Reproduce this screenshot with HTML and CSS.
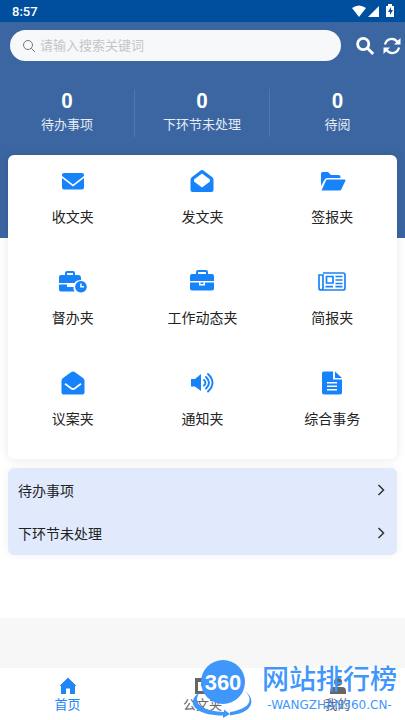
FILE: index.html
```html
<!DOCTYPE html>
<html lang="zh-CN">
<head>
<meta charset="utf-8">
<meta name="viewport" content="width=device-width, initial-scale=1">
<title>首页</title>
<link rel="stylesheet" href="styles.css">
</head>
<body>
<header class="header">
  <div class="status">
    <span>8:57</span>
    <svg width="44" height="14" viewBox="0 0 44 14" fill="currentColor" aria-hidden="true">
      <path d="M0 4Q7-1 14 4L7 13Z"/><path d="M27 2V13H16Z"/>
      <path fill-rule="evenodd" d="M34 2h2V0h4v2h2v11h-8ZM39 3l-3 5h2v3l3-5h-2Z"/>
    </svg>
  </div>
  <form class="search">
    <label class="search-box">
      <svg width="14" height="14" viewBox="0 0 14 14" fill="none" stroke="#777" aria-hidden="true"><circle cx="6" cy="6" r="4.5"/><path d="M9.3 9.3L13 13"/></svg>
      <input type="search" placeholder="请输入搜索关键词" aria-label="搜索">
    </label>
    <button class="tool" type="submit" aria-label="搜索">
      <svg width="18" height="18" viewBox="0 0 18 18" fill="none" stroke="currentColor" stroke-width="2.8" aria-hidden="true"><circle cx="7.200" cy="7" r="5.600"/><path d="M11.200 11l6 6"/></svg>
    </button>
    <button class="tool" type="button" aria-label="刷新">
      <svg width="18" height="18" viewBox="0 0 18 18" fill="none" stroke="currentColor" stroke-width="2.3" aria-hidden="true"><path d="M2 7.5C3.5 1.5 10.500 0 14.500 5M16 10.500C14.500 16.500 7.500 18 3.500 13"/><path d="M17.500 1v6.500h-6.500ZM.5 17v-6.500h6.500Z" fill="currentColor" stroke="none"/></svg>
    </button>
  </form>
  <div class="stats">
    <a href="#todo"><strong>0</strong><span>待办事项</span></a>
    <a href="#next"><strong>0</strong><span>下环节未处理</span></a>
    <a href="#read"><strong>0</strong><span>待阅</span></a>
  </div>
</header>
<main class="main">
  <nav class="card" aria-label="文件夹">
    <a href="#receive"><svg viewBox="0 0 28 24"><path d="M5 4H23Q25 4 25 6V7L14 15.500L3 7V6Q3 4 5 4Z"/><path d="M3 9L14 17.500L25 9V18.500Q25 20.500 23 20.500H5Q3 20.500 3 18.500Z"/></svg>收文夹</a>
    <a href="#send"><svg viewBox="0 0 28 24"><path fill-rule="evenodd" d="M14 1Q15 1 16 2L24 8Q25.500 9 25.500 11V21Q25.500 23 23.500 23H4.500Q2.500 23 2.500 21V11Q2.500 9 4 8L12 2Q13 1 14 1ZM14 4.500L6 10.500V12.500L14 18.500L22 12.500V10.500Z"/></svg>发文夹</a>
    <a href="#sign"><svg viewBox="0 0 28 24"><path d="M3 17V4.500Q3 3 4.500 3H10L13 6H20.500Q22.500 6 22.500 8V9H9.500Q7.500 9 6.700 10.500Z"/><path d="M9.500 10.500H26.500Q28 10.500 27.300 12L23.500 20Q23 21.500 21.500 21.500H3.500L8 11.500Q8.500 10.500 9.500 10.500Z"/></svg>签报夹</a>
    <a href="#supervise"><svg viewBox="0 0 28 24"><path fill-rule="evenodd" d="M6 5V3Q6 1 8 1H14Q16 1 16 3V5H19Q22 5 22 8V10Q17 10 15.500 13H0V7Q0 5 2 5ZM8 3V5H14V3ZM0 14.500H8V17H14.500Q14 19.500 15.500 21.500H2Q0 21.500 0 19.500Z"/><path fill-rule="evenodd" d="M22 11A5.800 5.800 0 1 1 21.900 11ZM21.200 13.500V17.500H25V16H22.700V13.500Z"/></svg>督办夹</a>
    <a href="#work"><svg viewBox="0 0 28 24"><path fill-rule="evenodd" d="M8 4V2Q8 0 10 0H18Q20 0 20 2V4H24Q26 4 26 6V11H2V6Q2 4 4 4ZM10 2V4H18V2ZM2 12.500H11V15.500H17V12.500H26V18.500Q26 20.500 24 20.500H4Q2 20.500 2 18.500ZM12.500 12.500H15.500V14H12.500Z"/></svg>工作动态夹</a>
    <a href="#brief"><svg viewBox="0 0 28 24"><path fill="none" stroke="currentColor" stroke-width="1.700" d="M5 3H25Q27 3 27 5V18Q27 20 25 20H3Q1 20 1 18V5H5V18Q5 20 3 20M8.500 6.500H15V13H8.500ZM17.500 6.500H24.500M17.500 10H24.500M17.500 13.500H24.500M7.500 16.700H15M17.500 16.700H24.500"/></svg>简报夹</a>
    <a href="#proposal"><svg viewBox="0 0 28 24"><path fill-rule="evenodd" d="M14 .5Q15 .5 16 1.200L24 7Q25.500 8 25.500 10V21.500Q25.500 23.500 23.500 23.500H4.500Q2.500 23.500 2.500 21.500V10Q2.500 8 4 7L12 1.200Q13 .5 14 .5ZM6.500 12L5.500 13.500L11.500 18Q14 20 16.500 18L22.500 13.500L21.500 12L15.500 16.500Q14 17.700 12.500 16.500Z"/></svg>议案夹</a>
    <a href="#notice"><svg viewBox="0 0 28 24"><path d="M3 8H7L13 3V20L7 15.500H3Z"/><path fill="none" stroke="currentColor" stroke-width="1.900" stroke-linecap="round" d="M16 9Q19 11.700 16 14.500M18 6Q24 11.700 18 17.500M20 3Q29 11.700 20 20.500"/></svg>通知夹</a>
    <a href="#general"><svg viewBox="0 0 28 24"><path fill-rule="evenodd" d="M6 .5H15V8.500H24V21.500Q24 23.500 22 23.500H6Q4 23.500 4 21.500V2.500Q4 .5 6 .5ZM9 11V12.500H19V11ZM9 14.500V16H19V14.500ZM9 18V19.500H19V18Z"/><path d="M17 .5L24 7H17Z"/></svg>综合事务</a>
  </nav>
  <nav class="list" aria-label="待处理">
    <a href="#todo">待办事项<svg width="8" height="12" viewBox="0 0 8 12" stroke-width="1.5"><path d="M1.500 1L6.500 6L1.500 11"/></svg></a>
    <a href="#next">下环节未处理<svg width="8" height="12" viewBox="0 0 8 12" stroke-width="1.5"><path d="M1.500 1L6.500 6L1.500 11"/></svg></a>
  </nav>
</main>
<footer class="footer">
  <nav class="tabs" aria-label="主导航">
    <a class="active" href="#home"><svg viewBox="0 0 18 18"><path d="M9 .5L17.500 9H16V17H11V11.500H7V17H2V9H.5Z"/></svg>首页</a>
    <a href="#docs"><svg viewBox="0 0 18 18"><path fill-rule="evenodd" d="M1 1H17V17H1ZM4 5V14H14V5ZM7 7H11V9H7Z"/></svg>公文夹</a>
    <a href="#me"><svg viewBox="0 0 18 18"><circle cx="9" cy="5" r="4"/><path d="M1 17V14Q1 10 5 10H13Q17 10 17 14V17Z"/></svg>我的</a>
  </nav>
  <div class="brand">
    <svg class="brand-logo" width="60" height="60" viewBox="0 0 60 60" aria-hidden="true">
      <circle cx="30" cy="23" r="22"/>
      <path d="M7 33C-1 43 7 52 31 53V50.500L37 55L30 59V56.500C-3 56-6 41 7 33ZM52 32C62 42 55 50 37 53V56.500C61 54 63 40 52 32Z"/>
      <text x="30" y="31" text-anchor="middle">360</text>
    </svg>
    <div class="brand-text"><span class="brand-name">网站排行榜</span><span class="brand-url">-WANGZHAN360.CN-</span></div>
  </div>
</footer>
</body>
</html>
```
FILE: styles.css
```css
* {
  box-sizing: border-box;
}

body {
  display: flex;
  flex-direction: column;
  min-height: 100vh;
  margin: 0;
  background: #f7f7f7;
  color: #222;
  font-family: Roboto, "Noto Sans CJK SC", sans-serif;
  font-size: 14px;
}

a {
  color: inherit;
  text-decoration: none;
}

.header {
  padding-bottom: 101px;
  background: #3b66a1;
  color: #fff;
}

.status {
  display: flex;
  align-items: center;
  justify-content: space-between;
  height: 22px;
  padding: 0 9px 0 12px;
  background: #004f9e;
  font-size: 13px;
  font-weight: 500;
}

.search {
  display: flex;
  align-items: center;
  gap: 9px;
  padding: 8px 4px 0 10px;
}

.search-box {
  display: flex;
  flex: 1;
  align-items: center;
  gap: 4px;
  height: 31px;
  margin-right: 6px;
  padding: 0 12px;
  border-radius: 16px;
  background: #f7f8fa;
}

.search-box input {
  flex: 1;
  min-width: 0;
  padding: 0;
  border: 0;
  outline: 0;
  background: none;
  font: inherit;
  font-size: 13px;
}

.search-box input::placeholder {
  color: #c4c5c8;
}

.tool {
  display: flex;
  padding: 0;
  border: 0;
  background: none;
  color: #fff;
}

.stats {
  display: grid;
  grid-template-columns: repeat(3, 1fr);
  margin-top: 28px;
}

.stats a {
  display: flex;
  flex-direction: column;
  align-items: center;
  height: 48px;
  border-right: 1px solid #5078ae;
  font-size: 13px;
  line-height: 24px;
}

.stats a:last-child {
  border-right: 0;
}

.stats span {
  color: #e4ebf5;
}

.stats strong {
  font-size: 20px;
}

.main {
  padding: 0 8px 63px;
  background: #fff;
}

.card {
  display: grid;
  grid-template-columns: repeat(3, 1fr);
  margin-top: -83px;
  padding-bottom: 1px;
  border-radius: 6px;
  background: #fff;
  box-shadow: 0 0 10px rgb(0 0 0 / 10%);
}

.card a {
  display: flex;
  flex-direction: column;
  align-items: center;
  gap: 13px;
  padding: 14px 0 28px;
  line-height: 22px;
}

.card svg {
  width: 28px;
  height: 24px;
  color: #1683fb;
  fill: currentColor;
}

.list {
  margin-top: 9px;
  padding-bottom: 1px;
  border-radius: 6px;
  background: #e0eafc;
  box-shadow: 0 0 10px rgb(0 0 0 / 6%);
}

.list a {
  display: flex;
  align-items: center;
  justify-content: space-between;
  height: 43px;
  padding: 0 12px 0 10px;
}

.list svg {
  fill: none;
  stroke: #333;
}

.footer {
  position: relative;
  margin-top: auto;
  background: #fff;
}

.tabs {
  display: grid;
  grid-template-columns: repeat(3, 1fr);
  height: 52px;
  padding-top: 9px;
}

.tabs a {
  display: flex;
  flex-direction: column;
  align-items: center;
  color: #666;
  font-size: 13px;
  line-height: 20px;
}

.tabs .active {
  color: #2185f5;
}

.tabs svg {
  width: 18px;
  height: 18px;
  fill: currentColor;
}

.brand {
  position: absolute;
  right: 8px;
  bottom: 1px;
  display: flex;
  align-items: center;
  gap: 9px;
  color: #3f97fb;
}

.brand-logo {
  fill: currentColor;
}

.brand-logo text {
  fill: #fff;
  font-family: "Liberation Sans Narrow", "Liberation Sans", sans-serif;
  font-size: 22px;
  font-weight: 700;
}

.brand-text {
  display: flex;
  flex-direction: column;
  align-items: center;
}

.brand-name {
  font-size: 27px;
  font-weight: 500;
  line-height: 32px;
}

.brand-url {
  font-family: "DejaVu Sans", sans-serif;
  font-size: 12px;
  line-height: 18px;
}
```
